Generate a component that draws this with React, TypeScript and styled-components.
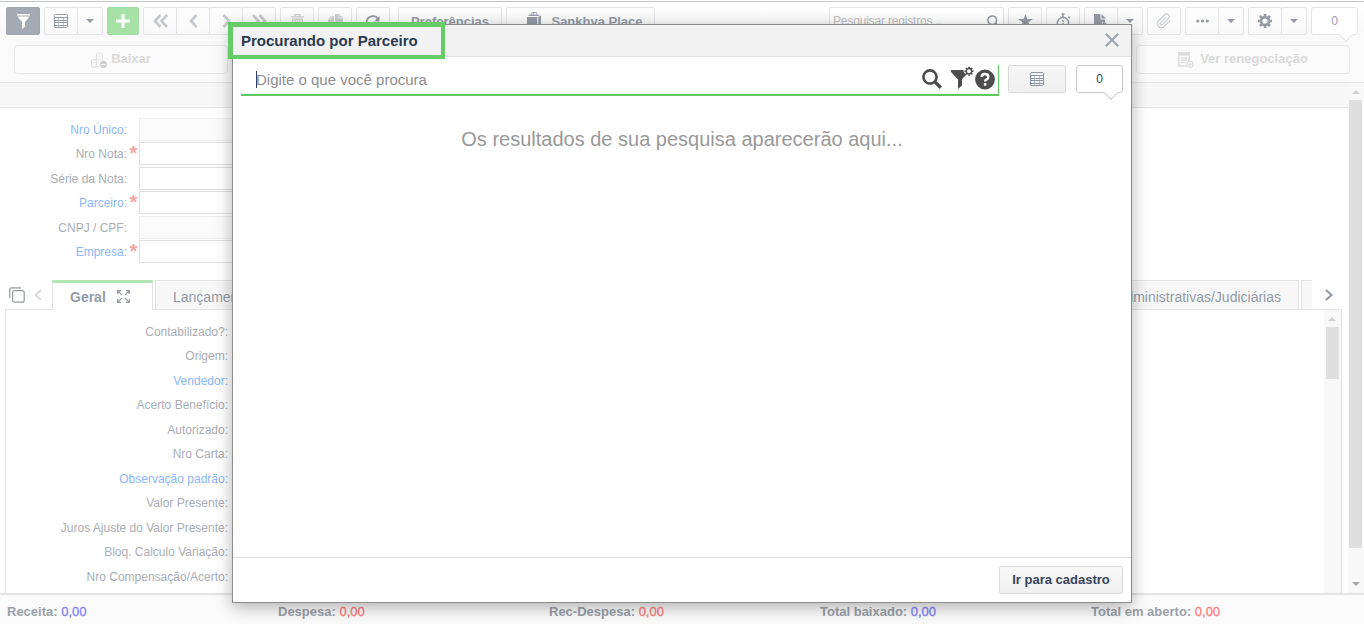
import React from "react";
import styled, { createGlobalStyle, css } from "styled-components";

const Global = createGlobalStyle`
  * { box-sizing: border-box; }
  body { margin: 0; background: #fff; font-family: "Liberation Sans", Arial, sans-serif; }
  svg { display: block; flex: none; }
`;

const Page = styled.div`
  position: relative;
  width: 1364px;
  height: 626px;
  overflow: hidden;
  display: flex;
  flex-direction: column;
  padding: 1px 0 2px;
`;
const TopBar = styled.header`
  height: 81px;
  flex: none;
  border-top: 1px solid #c4c6c4;
  background: linear-gradient(#fff, #f9f9f9 30px, #fbfbfb);
  padding: 5px 6px 0;
`;
const Tools = styled.div`
  display: flex;
  gap: 4px;
  height: 28px;
`;
const Group = styled.div<{ $push?: number | "auto" }>`
  display: flex;
  margin-left: ${(p) => (p.$push === "auto" ? "auto" : `${p.$push ?? 0}px`)};
`;
const tones = {
  plain: css`background: linear-gradient(#fdfdfd, #f9f9f9); border-color: #e4e4e4;`,
  dark: css`background: #a3aab4; border-color: #a0a7b1;`,
  green: css`background: #a6e2a6; border-color: #a0dba2;`,
};
const ToolButton = styled.button<{ $w?: number; $tone?: keyof typeof tones }>`
  width: ${(p) => p.$w ?? 34}px;
  height: 28px;
  padding: 0;
  border: 1px solid;
  border-radius: 2px;
  ${(p) => tones[p.$tone ?? "plain"]}
  color: #949ba6;
  font: bold 13px "Liberation Sans", Arial, sans-serif;
  display: flex;
  align-items: center;
  justify-content: center;
  gap: 10px;
  & + & { margin-left: -1px; }
`;
const PlaceButton = styled(ToolButton)`
  padding: 1px 0 0 9px;
  svg { margin-top: -3px; }
`;
const SearchBox = styled.div`
  width: 175px;
  height: 28px;
  border: 1px solid #e3e3e3;
  border-radius: 2px;
  background: #fff;
  display: flex;
  align-items: center;
  justify-content: space-between;
  padding: 0 3px;
  color: #c0c0c0;
  font-size: 12px;
  letter-spacing: -0.18px;
`;
const Counter = styled.div<{ $strong?: boolean }>`
  position: relative;
  flex: none;
  width: 47px;
  height: 28px;
  border: 1px solid ${(p) => (p.$strong ? "#cbcbcb" : "#e4e4e4")};
  border-radius: 3px;
  background: #fff;
  color: ${(p) => (p.$strong ? "#3a475a" : "#9ba1ab")};
  font-size: 12px;
  display: flex;
  align-items: center;
  justify-content: center;
  &::after {
    content: "";
    position: absolute;
    right: 6px;
    bottom: -6px;
    width: 9px;
    height: 9px;
    background: #fff;
    border: solid ${(p) => (p.$strong ? "#cbcbcb" : "#e4e4e4")};
    border-width: 0 1px 1px 0;
    transform: rotate(45deg);
  }
`;
const Actions = styled.div`
  display: flex;
  justify-content: space-between;
  padding: 10px 8px 0;
`;
const ActionButton = styled.button<{ $gap?: number }>`
  width: 214px;
  height: 29px;
  padding: 0 0 2px;
  border: 1px solid #e6e6e6;
  border-radius: 4px;
  background: #fbfbfb;
  color: #d9d9da;
  font: bold 13px "Liberation Sans", Arial, sans-serif;
  display: flex;
  align-items: center;
  justify-content: center;
  gap: ${(p) => p.$gap ?? 4}px;
  svg { margin-top: 3px; }
`;
const Main = styled.main`
  flex: 1;
  min-height: 0;
  display: flex;
  border-top: 1px solid #e4e4e4;
`;
const Content = styled.div`
  width: 1348px;
  flex: none;
  display: flex;
  flex-direction: column;
`;
const Band = styled.div`
  height: 25px;
  flex: none;
  background: #f7f7f7;
  border-bottom: 1px solid #e4e4e4;
`;
const Form = styled.div`
  padding-top: 10px;
  height: 172px;
  flex: none;
`;
const Field = styled.div`
  height: 24.4px;
  display: flex;
`;
const FieldLabel = styled.label<{ $link?: boolean }>`
  width: 127px;
  text-align: right;
  font-size: 12px;
  line-height: 25px;
  color: ${(p) => (p.$link ? "#8ab6fc" : "#a9adb5")};
`;
const Required = styled.span`
  width: 12px;
  padding-left: 2.5px;
  color: #f0a6a0;
  font: bold 20px/23px "Liberation Sans", Arial, sans-serif;
  height: 23px;
`;
const Input = styled.div<{ $off?: boolean }>`
  width: 260px;
  height: 23px;
  border: 1px solid ${(p) => (p.$off ? "#ededed" : "#dfdfdf")};
  background: ${(p) => (p.$off ? "#fbfbfb" : "#fff")};
`;
const Tabs = styled.div`
  display: flex;
  height: 29px;
  flex: none;
  padding-left: 9px;
  color: #949ba6;
`;
const TabIcon = styled.span<{ $w: number; $pad?: number }>`
  width: ${(p) => p.$w}px;
  flex: none;
  padding-left: ${(p) => p.$pad ?? 0}px;
  display: flex;
  align-items: center;
`;
const Tab = styled.div<{ $on?: boolean; $w: number }>`
  width: ${(p) => p.$w}px;
  flex: none;
  height: ${(p) => (p.$on ? 30 : 29)}px;
  position: relative;
  z-index: ${(p) => (p.$on ? 1 : 0)};
  margin-right: 2px;
  padding: ${(p) => (p.$on ? "3px" : "5px")} 17px 0;
  border: 1px solid #e3e3e3;
  border-bottom: 0;
  ${(p) => p.$on && "border-top: 3px solid #b2e6b2;"}
  background: ${(p) => (p.$on ? "#fff" : "#f7f7f7")};
  font-size: 14px;
  font-weight: ${(p) => (p.$on ? "bold" : "normal")};
  line-height: 22px;
  white-space: nowrap;
  display: flex;
  gap: 11px;
  svg { margin-top: 4px; }
`;
const EndTab = styled(Tab)`
  justify-content: flex-end;
`;
const CutTab = styled(Tab)`
  padding: 0;
  border-right: 0;
`;
const TabGap = styled.div`
  flex: 1;
`;
const Panel = styled.section`
  flex: 1;
  margin: 0 6px 0 5px;
  border: 1px solid #e3e3e3;
  border-bottom: 0;
  display: flex;
  justify-content: space-between;
  overflow: hidden;
`;
const Labels = styled.div`
  width: 222px;
  padding-top: 10px;
  text-align: right;
  font-size: 12px;
`;
const PanelLabel = styled.div<{ $link?: boolean }>`
  height: 24.49px;
  line-height: 24px;
  color: ${(p) => (p.$link ? "#8ab6fc" : "#a9adb5")};
`;
const Scroll = styled.div<{ $w: number }>`
  width: ${(p) => p.$w}px;
  flex: none;
  background: #f8f8f8;
  padding: 7px 2px 7px 1px;
  display: flex;
  flex-direction: column;
  align-items: center;
`;
const Thumb = styled.div<{ $h: number }>`
  width: 13px;
  height: ${(p) => p.$h}px;
  flex: none;
  margin: 6px 0 auto;
  background: #dfdfdf;
`;
const Totals = styled.footer`
  height: 31px;
  flex: none;
  border-top: 2px solid #e3e3e3;
  background: #fbfbfb;
  padding: 3px 0 0 7px;
  display: grid;
  grid-template-columns: repeat(5, 271px);
  font-size: 13px;
  font-weight: bold;
  color: #9aa0a8;
  line-height: 28px;
`;
const Amount = styled.span<{ $neg?: boolean }>`
  font-weight: normal;
  -webkit-text-stroke: 0.3px;
  color: ${(p) => (p.$neg ? "#ff7b7b" : "#7f7ffb")};
`;
const Modal = styled.div`
  position: absolute;
  left: 232px;
  top: 24px;
  width: 900px;
  height: 579px;
  border: 1px solid #8c8c8c;
  background: #fff;
  box-shadow: 0 4px 16px rgba(0, 0, 0, 0.3);
  display: flex;
  flex-direction: column;
`;
const ModalHead = styled.div`
  height: 32px;
  flex: none;
  background: #f2f2f2;
  border-bottom: 1px solid #e0e0e0;
  padding: 0 12px 0 8px;
  display: flex;
  align-items: center;
  justify-content: space-between;
  color: #2c3a50;
  font-size: 15px;
  font-weight: bold;
  svg { margin-top: -1px; }
`;
const Highlight = styled.div`
  position: absolute;
  left: 228px;
  top: 22px;
  width: 217px;
  height: 37px;
  border: 5px solid #66cc66;
  border-right-width: 4px;
  border-bottom-width: 4px;
`;
const ModalBody = styled.div`
  flex: 1;
  padding: 8px 8px 0;
`;
const SearchRow = styled.div`
  display: flex;
  align-items: flex-start;
`;
const Query = styled.div`
  width: 758px;
  height: 31px;
  border-right: 1px solid #5fca5f;
  border-bottom: 2px solid #5fca5f;
  padding: 0 3px 0 15px;
  display: flex;
  align-items: center;
  font-size: 15px;
  color: #8e8e8e;
`;
const Caret = styled.span`
  width: 1px;
  height: 17px;
  margin-right: -1px;
  background: #2c3a50;
`;
const QueryText = styled.span`
  flex: 1;
`;
const QueryIcons = styled.div`
  display: flex;
  align-items: center;
  margin-top: -1px;
  svg:first-child { margin-right: 9px; }
`;
const GridButton = styled.button`
  width: 58px;
  height: 28px;
  margin: 0 10px 0 9px;
  padding: 0;
  border: 1px solid #d9d9d9;
  border-radius: 2px;
  background: linear-gradient(#f6f6f6, #efefef);
  display: flex;
  align-items: center;
  justify-content: center;
  color: #8d95a4;
`;
const Hint = styled.p`
  margin: 31px 0 0;
  text-align: center;
  font-size: 20px;
  line-height: 24px;
  color: #999;
`;
const ModalFoot = styled.div`
  height: 45px;
  border-top: 1px solid #e0e0e0;
  padding: 8px 8px 0;
  display: flex;
  justify-content: flex-end;
`;
const FootButton = styled.button`
  width: 124px;
  height: 28px;
  padding: 0 0 2px;
  border: 1px solid #d9d9d9;
  border-radius: 2px;
  background: linear-gradient(#f9f9f9, #efefef);
  color: #37445a;
  font: bold 13px "Liberation Sans", Arial, sans-serif;
`;

const Funnel = () => (
  <svg width="13" height="15" viewBox="0 0 13 15" fill="#fff"><path d="M0 0h13v1.500H0zM.5 2.500h12L8 8v4.500L5 15V8z" /></svg>
);
const GridIcon = () => (
  <svg width="14" height="14" viewBox="0 0 14 14" fill="none" stroke="currentColor">
    <rect x=".5" y=".5" width="13" height="13" rx="1" />
    <path d="M1 3.500h12M1 6.500h12M1 8.500h12M1 11.500h12" />
    <path d="M4.500 3v10M9.500 3v10" strokeOpacity=".45" />
  </svg>
);
const Down = () => (
  <svg width="8" height="4" viewBox="0 0 8 4" fill="#949ba6"><path d="M0 0h8L4 4z" /></svg>
);
const Plus = () => (
  <svg width="14" height="14" viewBox="0 0 14 14" stroke="#fff" strokeWidth="3"><path d="M7 0v14M0 7h14" /></svg>
);
const Chevrons = ({ d, w }: { d: string; w: number }) => (
  <svg width={w} height="14" viewBox={`0 0 ${w} 14`} fill="none" stroke="#c5c9cf" strokeWidth="2.600"><path d={d} /></svg>
);
const Trash = () => (
  <svg width="13" height="15" viewBox="0 0 13 15" fill="none" stroke="#cbced2" strokeWidth="1.300">
    <path d="M0 2.800h13M4 2.800V.7h5v2.100M1.700 5v9.300h9.600V5M4.200 5v7M6.500 5v7M8.800 5v7M1 5.200h11" />
  </svg>
);
const Copies = () => (
  <svg width="15" height="14" viewBox="0 0 15 14" fill="#cccfd2">
    <path d="M0 5l3-3h3v9H0zM7 0h4l4 4v9H7z" /><path d="M11 0v4h4M3 2v3H0" stroke="#fafafa" strokeWidth=".6" fill="none" />
  </svg>
);
const Refresh = () => (
  <svg width="16" height="15" viewBox="0 0 16 15" fill="none" stroke="#949ba6" strokeWidth="1.800">
    <path d="M2.500 11.500A6 6 0 1 1 13 5" /><path d="M14.500 2v5.500H9z" fill="#949ba6" stroke="none" />
  </svg>
);
const Bag = () => (
  <svg width="14" height="16" viewBox="0 0 14 16" fill="#949ba6">
    <path d="M0 5h10.300v11H0zM11.300 5L14 3.500v10.200L11.300 16zM.5 4l2.500-1.300h10.500L11 4z" />
    <path d="M4 4V2q0-1.500 2-1.500h2q2 0 2 1.500v2M6 3.500V2.300q0-1.300 1.500-1.300" fill="none" stroke="#949ba6" strokeWidth=".9" />
  </svg>
);
const Magnifier = ({ s, w, c }: { s: number; w: number; c: string }) => (
  <svg width={s} height={s} viewBox="0 0 20 20" fill="none" stroke={c} strokeWidth={w}>
    <circle cx="8" cy="8" r="6.600" /><path d="M12.800 12.800l6 6" strokeWidth={w * 1.3} />
  </svg>
);
const Star = () => (
  <svg width="15" height="14" viewBox="0 0 15 14" fill="#949ba6"><path d="M7.500 0l1.900 5H15l-4.500 3.300L12.200 14 7.500 10.700 2.800 14l1.700-5.700L0 5h5.600z" /></svg>
);
const Stopwatch = () => (
  <svg width="15" height="17" viewBox="0 0 15 17" fill="none" stroke="#949ba6" strokeWidth="1.500">
    <circle cx="7" cy="10" r="5.600" /><path d="M5.500 1h3M7 1v3M12.300 3.600l1.500 1.500M7 7v2M7 10v1.500" />
  </svg>
);
const FileIcon = () => (
  <svg width="14" height="15" viewBox="0 0 14 15" fill="#949ba6"><path d="M0 0h6.500v5.500H11V8H8v6H0zM7.500 0L12 4.500H7.500zM9 9.500V7l5 4-5 4v-2.500H6v-3z" /></svg>
);
const Clip = () => (
  <svg width="16" height="16" viewBox="0 0 24 24" fill="none" stroke="#c9cdd2" strokeWidth="1.800">
    <path d="M21.400 11.100l-9.200 9.200a6 6 0 0 1-8.500-8.500l9.200-9.200a4 4 0 0 1 5.700 5.700l-9.200 9.200a2 2 0 0 1-2.800-2.800l8.500-8.500" />
  </svg>
);
const Dots = () => (
  <svg width="13" height="4" viewBox="0 0 13 4" fill="#949ba6"><circle cx="1.800" cy="2" r="1.600" /><circle cx="6.500" cy="2" r="1.600" /><circle cx="11.200" cy="2" r="1.600" /></svg>
);
const Gear = () => (
  <svg width="14" height="14" viewBox="-7 -7 14 14" fill="none" stroke="#949ba6">
    <circle r="3.900" strokeWidth="2.600" />
    <path strokeWidth="2.600" d="M0-7v2.500M0 7V4.500M-7 0h2.500M7 0H4.500M-5-5l1.600 1.600M5 5L3.400 3.400M-5 5l1.600-1.600M5-5L3.400-3.400" />
  </svg>
);
const Coins = () => (
  <svg width="16" height="16" viewBox="0 0 16 16" fill="#fafafa" stroke="#e2e2e2">
    <path d="M.5 8q2.500-1.500 5 0v6.500q-2.500 1.300-5 0zM5.500 1.500q3-1.600 6 0v13q-3 1.300-6 0z" />
    <path d="M.5 10.500h5M5.500 5h6M5.500 8h6M5.500 11h6" strokeOpacity=".5" />
    <circle cx="12.500" cy="12.500" r="3.400" fill="#cecece" stroke="none" /><path d="M10.500 12.500h4" stroke="#fff" />
  </svg>
);
const Calc = () => (
  <svg width="16" height="16" viewBox="0 0 16 16" fill="none" stroke="#d6d6d6">
    <path d="M.8.8h10.400v13H.8z" strokeWidth="1.200" /><path d="M1 2.500h10" strokeWidth="2" /><path d="M3 6h6.500M3 8.300h6.500M3 10.600h5" strokeDasharray="1.500 .7" strokeWidth="1.500" />
    <circle cx="12" cy="12.300" r="3.200" fill="#fbfbfb" /><path d="M12 10.500v3.600M10.200 12.300h3.600" />
  </svg>
);
const Stack = () => (
  <svg width="16" height="16" viewBox="0 0 16 16" fill="none" stroke="#949ba6" strokeWidth="1.200">
    <rect x="3.600" y="3.600" width="11.600" height="11.600" rx="2" /><path d="M.8 11V2.500Q.8.800 2.500.800H12" />
  </svg>
);
const Expand = () => (
  <svg width="13" height="13" viewBox="0 0 13 13" fill="none" stroke="#949ba6" strokeWidth="1.200">
    <path d="M.6 4V.6H4M.6.6L5 5M9 .6h3.400V4M12.400.6L8 5M.6 9v3.400H4M.6 12.400L5 8M12.400 9v3.400H9M12.400 12.400L8 8" />
  </svg>
);
const Arrow = ({ down, c }: { down?: boolean; c: string }) => (
  <svg width="8" height="4" viewBox="0 0 8 4" fill={c}><path d={down ? "M0 0h8L4 4z" : "M0 4h8L4 0z"} /></svg>
);
const FunnelGear = () => (
  <svg width="24" height="28" viewBox="0 0 24 28" fill="#4d4d4d">
    <path d="M0 5h12.500q0 3 3 4.500L11 14v6.500L7 24v-9.500L0 7z" />
    <g fill="none" stroke="#4d4d4d"><circle cx="18" cy="6.200" r="2.700" strokeWidth="1.400" />
      <path strokeWidth="1.600" d="M18 1.700v1.500M18 9.200v1.500M13.500 6.200H15M21 6.200h1.500M14.800 3l1 1M20.200 8.400l1 1M14.800 9.400l1-1M20.200 4l1-1" /></g>
  </svg>
);
const Help = () => (
  <svg width="20" height="21" viewBox="0 0 21 21">
    <circle cx="10.500" cy="10.500" r="10.400" fill="#4d4d4d" />
    <path d="M7 8q0-3.300 3.500-3.300T14 7.800q0 1.700-1.800 2.600-1.500.8-1.500 2.300" fill="none" stroke="#fff" strokeWidth="2.500" />
    <path d="M9.300 14.300h2.700V17H9.300z" fill="#fff" />
  </svg>
);
const Close = () => (
  <svg width="14" height="14" viewBox="0 0 14 14" stroke="#9aa1aa" strokeWidth="2"><path d="M.8.8l12.400 12.400M13.200.8L.8 13.200" /></svg>
);

const fields = [
  { t: "Nro Único:", link: true, off: true },
  { t: "Nro Nota:", req: true },
  { t: "Série da Nota:" },
  { t: "Parceiro:", link: true, req: true },
  { t: "CNPJ / CPF:", off: true },
  { t: "Empresa:", link: true, req: true },
];
const labels = ["Contabilizado?:", "Origem:", "Vendedor:", "Acerto Benefício:", "Autorizado:", "Nro Carta:", "Observação padrão:", "Valor Presente:", "Juros Ajuste do Valor Presente:", "Bloq. Calculo Variação:", "Nro Compensação/Acerto:"];
const totals: [string, boolean][] = [["Receita:", false], ["Despesa:", true], ["Rec-Despesa:", true], ["Total baixado:", false], ["Total em aberto:", true]];

export default function App() {
  return (
    <>
      <Global />
      <Page>
        <TopBar>
          <Tools>
            <ToolButton $tone="dark"><Funnel /></ToolButton>
            <Group><ToolButton><GridIcon /></ToolButton><ToolButton $w={26}><Down /></ToolButton></Group>
            <ToolButton $w={32} $tone="green"><Plus /></ToolButton>
            <Group>
              <ToolButton><Chevrons w={15} d="M7.500 1L2 7l5.500 6M14 1L8.500 7l5.500 6" /></ToolButton>
              <ToolButton><Chevrons w={9} d="M7.500 1L2 7l5.500 6" /></ToolButton>
              <ToolButton><Chevrons w={9} d="M1.500 1L7 7l-5.500 6" /></ToolButton>
              <ToolButton><Chevrons w={15} d="M1 1l5.500 6L1 13M7.500 1L13 7l-5.500 6" /></ToolButton>
            </Group>
            <Group><ToolButton><Trash /></ToolButton></Group>
            <Group><ToolButton><Copies /></ToolButton></Group>
            <Group><ToolButton><Refresh /></ToolButton></Group>
            <Group $push={4}><ToolButton $w={104}>Preferências</ToolButton></Group>
            <Group><PlaceButton $w={149}><Bag />Sankhya Place</PlaceButton></Group>
            <Group $push="auto"><SearchBox>Pesquisar registros...<Magnifier s={13} w={2.4} c="#949ba6" /></SearchBox></Group>
            <Group><ToolButton><Star /></ToolButton></Group>
            <Group><ToolButton><Stopwatch /></ToolButton></Group>
            <Group><ToolButton><FileIcon /></ToolButton><ToolButton $w={26}><Down /></ToolButton></Group>
            <Group><ToolButton><Clip /></ToolButton></Group>
            <Group><ToolButton><Dots /></ToolButton><ToolButton $w={26}><Down /></ToolButton></Group>
            <Group><ToolButton><Gear /></ToolButton><ToolButton $w={26}><Down /></ToolButton></Group>
            <Counter>0</Counter>
          </Tools>
          <Actions>
            <ActionButton><Coins />Baixar</ActionButton>
            <ActionButton $gap={6}><Calc />Ver renegociação</ActionButton>
          </Actions>
        </TopBar>
        <Main>
          <Content>
            <Band />
            <Form>
              {fields.map((f) => (
                <Field key={f.t}>
                  <FieldLabel $link={f.link}>{f.t}</FieldLabel>
                  <Required>{f.req ? "*" : ""}</Required>
                  <Input $off={f.off} />
                </Field>
              ))}
            </Form>
            <Tabs>
              <TabIcon $w={25}><Stack /></TabIcon>
              <TabIcon $w={18}><svg width="8" height="12" viewBox="0 0 8 12" fill="none" stroke="#d5d8dc" strokeWidth="1.700"><path d="M7 1L1.500 6 7 11" /></svg></TabIcon>
              <Tab $on $w={101}>Geral<Expand /></Tab>
              <Tab $w={120}>Lançamentos</Tab>
              <TabGap />
              <EndTab $w={320}>Informações Administrativas/Judiciárias</EndTab>
              <CutTab $w={11} />
              <TabIcon $w={34} $pad={11}><svg width="8" height="12" viewBox="0 0 8 12" fill="none" stroke="#949ba6" strokeWidth="2.200"><path d="M1 1l5.500 5L1 11" /></svg></TabIcon>
            </Tabs>
            <Panel>
              <Labels>
                {labels.map((l) => (
                  <PanelLabel key={l} $link={l === "Vendedor:" || l === "Observação padrão:"}>{l}</PanelLabel>
                ))}
              </Labels>
              <Scroll $w={17}><Arrow c="#d0d0d0" /><Thumb $h={52} /></Scroll>
            </Panel>
          </Content>
          <Scroll $w={16}><Arrow c="#cfcfcf" /><Thumb $h={448} /><Arrow down c="#a6a6a6" /></Scroll>
        </Main>
        <Totals>
          {totals.map(([t, neg]) => (
            <span key={t}>{t} <Amount $neg={neg}>0,00</Amount></span>
          ))}
        </Totals>
        <Modal role="dialog">
          <ModalHead><span>Procurando por Parceiro</span><Close /></ModalHead>
          <ModalBody>
            <SearchRow>
              <Query>
                <Caret /><QueryText>Digite o que você procura</QueryText>
                <QueryIcons>
                  <Magnifier s={20} w={2.6} c="#4d4d4d" />
                  <FunnelGear />
                  <Help />
                </QueryIcons>
              </Query>
              <GridButton><GridIcon /></GridButton>
              <Counter $strong>0</Counter>
            </SearchRow>
            <Hint>Os resultados de sua pesquisa aparecerão aqui...</Hint>
          </ModalBody>
          <ModalFoot><FootButton>Ir para cadastro</FootButton></ModalFoot>
        </Modal>
        <Highlight />
      </Page>
    </>
  );
}
